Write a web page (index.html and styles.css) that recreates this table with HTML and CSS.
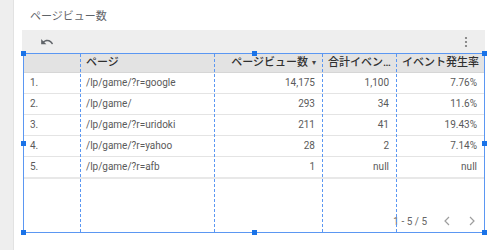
FILE: index.html
```html
<!DOCTYPE html>
<html lang="ja">
<head>
<meta charset="utf-8">
<link rel="stylesheet" href="styles.css">
</head>
<body>
<div class="app">
  <div class="rail"></div>
  <div class="canvas">
    <div class="title">ページビュー数</div>
    <div class="widget">
      <div class="toolbar">
        <svg class="undo" width="14" height="14" viewBox="0 0 24 24"><path d="M12.5 8c-2.65 0-5.050.99-6.9 2.6L2 7v9h9l-3.62-3.620c1.39-1.16 3.16-1.88 5.12-1.88 3.54 0 6.55 2.31 7.6 5.5l2.37-.78C21.08 11.03 17.15 8 12.5 8z"/></svg>
        <svg class="kebab" width="4" height="12" viewBox="0 0 4 12"><circle cx="2" cy="2" r="1.1"/><circle cx="2" cy="6" r="1.1"/><circle cx="2" cy="10" r="1.1"/></svg>
      </div>
      <div class="tablebox">
        <div class="grid">
          <div class="hd"></div>
          <div class="hd">ページ</div>
          <div class="hd num">ページビュー数<span class="caret">▾</span></div>
          <div class="hd trunc">合計イベン…</div>
          <div class="hd num">イベント発生率</div>

          <div class="cell">1.</div>
          <div class="cell">/lp/game/?r=google</div>
          <div class="cell num">14,175</div>
          <div class="cell num">1,100</div>
          <div class="cell num">7.76%</div>

          <div class="cell">2.</div>
          <div class="cell">/lp/game/</div>
          <div class="cell num">293</div>
          <div class="cell num">34</div>
          <div class="cell num">11.6%</div>

          <div class="cell">3.</div>
          <div class="cell">/lp/game/?r=uridoki</div>
          <div class="cell num">211</div>
          <div class="cell num">41</div>
          <div class="cell num">19.43%</div>

          <div class="cell">4.</div>
          <div class="cell">/lp/game/?r=yahoo</div>
          <div class="cell num">28</div>
          <div class="cell num">2</div>
          <div class="cell num">7.14%</div>

          <div class="cell last">5.</div>
          <div class="cell last">/lp/game/?r=afb</div>
          <div class="cell last num">1</div>
          <div class="cell last num">null</div>
          <div class="cell last num">null</div>
        </div>
        <div class="filler">
          <div class="pager">
            <span class="range">1 - 5 / 5</span>
            <span class="pbtn"><svg width="8" height="10" viewBox="0 0 8 10"><path d="M6 1L2 5l4 4" fill="none" stroke="#9e9e9e" stroke-width="1.2"/></svg></span>
            <span class="pbtn"><svg width="8" height="10" viewBox="0 0 8 10"><path d="M2 1l4 4-4 4" fill="none" stroke="#9e9e9e" stroke-width="1.2"/></svg></span>
          </div>
        </div>
        <div class="guide g1"></div>
        <div class="guide g2"></div>
        <div class="guide g3"></div>
        <div class="guide g4"></div>
        <div class="handle tl"></div>
        <div class="handle tm"></div>
        <div class="handle tr"></div>
        <div class="handle ml"></div>
        <div class="handle mr"></div>
        <div class="handle bl"></div>
        <div class="handle bm"></div>
        <div class="handle br"></div>
      </div>
    </div>
  </div>
</div>
</body>
</html>
```
FILE: styles.css
```css
* { box-sizing: border-box; }
html, body { margin: 0; padding: 0; }
body {
  width: 500px;
  height: 250px;
  overflow: hidden;
  background: #ffffff;
  font-family: Roboto, "Noto Sans CJK JP", sans-serif;
}
.app { display: flex; height: 250px; }
.rail {
  width: 14px;
  background: #eeeeee;
  border-right: 1px solid #e2e2e2;
  flex: none;
}
.canvas {
  flex: 1;
  padding-left: 8px;
}
.title {
  height: 30px;
  padding: 10px 0 0 8px;
  font-size: 11px;
  line-height: 14px;
  color: #5f6368;
}
.widget { width: 463px; }
.toolbar {
  height: 23px;
  background: #eeeeee;
  display: flex;
  align-items: center;
  justify-content: space-between;
  padding: 0 17px 0 18px;
}
.undo { fill: #5f6368; margin-top: 1px; }
.kebab { fill: #757575; }
.tablebox {
  position: relative;
  margin-left: 1px;
  width: 462px;
  height: 180px;
  border: 1px solid #5b97f2;
  display: flex;
  flex-direction: column;
}
.grid {
  display: grid;
  grid-template-columns: 56px 134px 108px 74px 88px;
}
.hd {
  height: 19px;
  background: #e3e3e3;
  border-bottom: 1px solid #d6d6d6;
  font-size: 11px;
  font-weight: 500;
  color: #303030;
  line-height: 18px;
  padding: 0 6px;
  white-space: nowrap;
}
.hd.num { text-align: right; }
.hd.trunc { padding: 0 1px 0 6px; }
.caret {
  font-size: 8px;
  margin-left: 4px;
  color: #444;
  vertical-align: 1px;
}
.cell {
  height: 21px;
  border-bottom: 1px solid #e4e4e4;
  font-size: 10px;
  line-height: 20px;
  color: #5a5a5a;
  padding: 0 6px;
  white-space: nowrap;
}
.cell.num { text-align: right; padding-right: 7px; }
.cell.last { border-bottom: 2px solid #e8e8e8; height: 22px; }
.filler {
  flex: 1;
  display: flex;
  align-items: flex-end;
  justify-content: flex-end;
  padding-bottom: 4px;
}
.pager {
  display: flex;
  align-items: center;
  height: 14px;
}
.range {
  font-size: 10px;
  color: #666666;
  margin-right: 7px;
}
.pbtn {
  width: 25px;
  display: flex;
  justify-content: center;
  align-items: center;
}
.guide {
  position: absolute;
  top: 0;
  bottom: 0;
  width: 0;
  border-left: 1px dashed #5b97f2;
}
.g1 { left: 56px; }
.g2 { left: 190px; }
.g3 { left: 298px; }
.g4 { left: 372px; }
.handle {
  position: absolute;
  width: 5px;
  height: 5px;
  background: #1a73e8;
}
.tl { left: -3px; top: -3px; }
.tm { left: 228px; top: -3px; }
.tr { right: -3px; top: -3px; }
.ml { left: -3px; top: 87px; }
.mr { right: -3px; top: 87px; }
.bl { left: -3px; bottom: -3px; }
.bm { left: 228px; bottom: -3px; }
.br { right: -3px; bottom: -3px; }
```
